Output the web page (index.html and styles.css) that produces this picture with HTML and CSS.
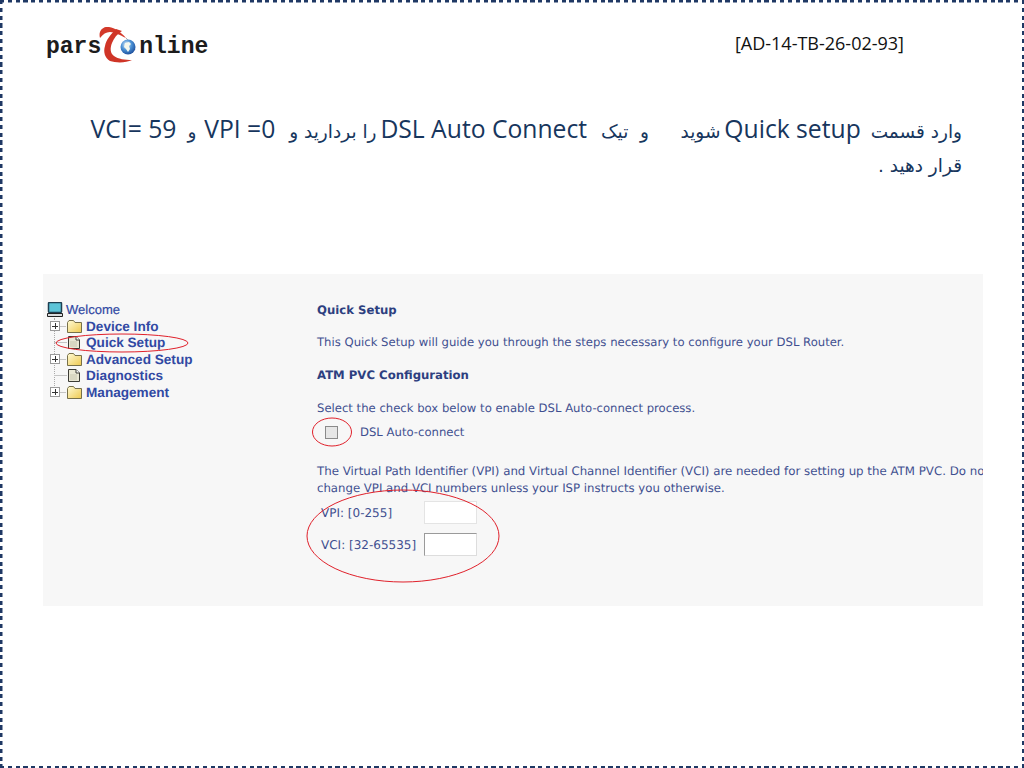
FILE: index.html
```html
<!DOCTYPE html>
<html lang="fa">
<head>
<meta charset="utf-8">
<title>Quick Setup</title>
<link rel="stylesheet" href="styles.css">
</head>
<body>
<svg class="defs" width="0" height="0">
  <defs>
    <linearGradient id="fold" x1="0" y1="0" x2="1" y2="1">
      <stop offset="0" stop-color="#fffbd6"/>
      <stop offset="1" stop-color="#eec94f"/>
    </linearGradient>
    <symbol id="i-folder" viewBox="0 0 17 15">
      <path d="M1.500 13.500V3.500L3 1.500H7.500L9 3.500H15.500V13.500Z" fill="url(#fold)" stroke="#77704a"/>
    </symbol>
    <symbol id="i-doc" viewBox="0 0 14 15">
      <path d="M1.500 1.500H9L12.500 5V13.500H1.500Z" fill="#e9e7d4" stroke="#3c3c36"/>
      <path d="M9 1.500V5H12.500" fill="#fff" stroke="#3c3c36"/>
      <path d="M3 7H10M3 9H10M3 11H10" stroke="#c9c7b0"/>
    </symbol>
  </defs>
</svg>
<main class="slide">
  <header class="top" dir="ltr">
    <div class="logo">
      <span>pars</span>
      <svg class="logo-mark" width="38" height="36" viewBox="0 0 38 36">
        <defs>
          <radialGradient id="globe" cx="0.4" cy="0.35" r="0.75">
            <stop offset="0" stop-color="#e8f2fb"/>
            <stop offset="0.45" stop-color="#4d93d6"/>
            <stop offset="1" stop-color="#123f8f"/>
          </radialGradient>
        </defs>
        <path d="M1 11C-1 4 4-1 10 0C16 1 22 5 27 11C21 8 15 5 11 5C7 5 4 7 1 11Z" fill="#d3392a"/>
        <path d="M17 2C12 7 7 13 6 19C4 25 6 31 11 34C17 36 27 36 33 33C26 33 19 32 15 29C11 26 11 21 13 16C15 11 18 7 23 4Z" fill="#cf3527"/>
        <path d="M27 11C31 15 34 19 36 23" fill="none" stroke="#b9a9a2" stroke-width="1"/>
        <circle cx="29" cy="20" r="7.500" fill="url(#globe)"/>
        <path d="M26 16l4-1 2 2-2 2 1 3-2 3-2-3-2-2z" fill="#f4f8ee"/>
      </svg>
      <span>nline</span>
    </div>
    <div class="doc-id">[AD-14-TB-26-02-93]</div>
  </header>

  <p class="title" dir="rtl">وارد قسمت <span class="lat q">Quick setup</span> <span class="s">شوید</span> &nbsp;&nbsp; و&nbsp; تیک <span class="lat d">DSL Auto Connect</span> را بردارید و <bdi class="lat v">VPI =0</bdi> و <bdi class="lat w">VCI= 59</bdi> قرار دهید .</p>

  <section class="shot">
    <nav class="tree">
      <div class="node root">
        <svg class="ico" width="18" height="16" viewBox="0 0 18 16"><rect x="2.500" y="0.500" width="13" height="10" rx="1" fill="#5cc4d8" stroke="#1d3f52" stroke-width="1.500"/><path d="M1.500 11.500h15v3h-15z" fill="#d9dcde" stroke="#222"/></svg>
        <span>Welcome</span>
      </div>
      <div class="node"><i class="plus"></i><i class="link"></i><svg class="leaf" width="17" height="15"><use href="#i-folder"/></svg><a>Device Info</a></div>
      <div class="node"><i class="stub"></i><svg class="leaf doc" width="14" height="15"><use href="#i-doc"/></svg><a>Quick Setup</a></div>
      <div class="node"><i class="plus"></i><i class="link"></i><svg class="leaf" width="17" height="15"><use href="#i-folder"/></svg><a>Advanced Setup</a></div>
      <div class="node"><i class="stub"></i><svg class="leaf doc" width="14" height="15"><use href="#i-doc"/></svg><a>Diagnostics</a></div>
      <div class="node"><i class="plus"></i><i class="link"></i><svg class="leaf" width="17" height="15"><use href="#i-folder"/></svg><a>Management</a></div>
    </nav>
    <div class="form">
      <h2>Quick Setup</h2>
      <p class="lead a">This Quick Setup will guide you through the steps necessary to configure your DSL Router.</p>
      <h2 class="sub">ATM PVC Configuration</h2>
      <p class="lead">Select the check box below to enable DSL Auto-connect process.</p>
      <label class="check"><input type="checkbox"><span>DSL Auto-connect</span></label>
      <p class="para"><span class="l1">The Virtual Path Identifier (VPI) and Virtual Channel Identifier (VCI) are needed for setting up the ATM PVC. Do not</span><br><span class="l2">change VPI and VCI numbers unless your ISP instructs you otherwise.</span></p>
      <div class="field vpi"><span>VPI: [0-255]</span><input type="text"></div>
      <div class="field vci"><span>VCI: [32-65535]</span><input type="text"></div>
    </div>
    <svg class="marks" width="940" height="332" viewBox="0 0 940 332">
      <ellipse cx="79" cy="69" rx="66" ry="9" />
      <ellipse cx="289" cy="158" rx="19.500" ry="14" />
      <ellipse cx="360" cy="262" rx="96" ry="46" />
    </svg>
  </section>
</main>
</body>
</html>
```
FILE: styles.css
```css
* { box-sizing: border-box; }
html, body { margin: 0; padding: 0; background: #fff; }
.defs { position: absolute; }
.slide {
  width: 1024px;
  height: 768px;
  overflow: hidden;
  padding: 26px 41px 0 43px;
  background-color: #fff;
  background-image:
    repeating-linear-gradient(90deg, #1f3864 0 4.200px, transparent 4.200px 7.800px),
    repeating-linear-gradient(90deg, #1f3864 0 4.200px, transparent 4.200px 7.800px),
    repeating-linear-gradient(180deg, #1f3864 0 4.200px, transparent 4.200px 7.800px),
    repeating-linear-gradient(180deg, #1f3864 0 4.200px, transparent 4.200px 7.800px);
  background-size: 100% 2.500px, 100% 2.500px, 2.500px 100%, 2.500px 100%;
  background-position: 0 0, 0 100%, 0 0, 100% 0;
  background-repeat: no-repeat;
}
.top {
  display: flex;
  justify-content: space-between;
  align-items: flex-start;
  height: 38px;
}
.logo {
  display: flex;
  align-items: center;
  margin-left: 3px;
  height: 38px;
  font: bold 23px/38px "Liberation Mono", monospace;
  color: #1c1c1c;
}
.logo span { position: relative; top: 2px; }
.logo-mark { display: block; flex: none; margin: 0 2px 0 -2px; }
.doc-id {
  margin: 5px 79px 0 0;
  font: 18px/24px "Open Sans", sans-serif;
  color: #111;
}
.title {
  margin: 48px 21px 0 36px;
  font: 18.500px/34px "DejaVu Sans", sans-serif;
  color: #17365d;
  height: 144px;
}
.lat { font: 24.700px/34px "Open Sans", sans-serif; white-space: nowrap; }
.q { margin-right: 4px; margin-left: -2px; }
.d { margin-right: 8px; margin-left: -2px; }
.s { margin-left: 8px; }
.v { margin-right: 8px; margin-left: 2px; }
.w { margin-right: 5px; }
.shot {
  position: relative;
  display: flex;
  width: 940px;
  height: 332px;
  margin-top: 18px;
  overflow: hidden;
  background: #f7f7f7;
  font-family: "DejaVu Sans", sans-serif;
  color: #3f4f90;
  text-rendering: geometricPrecision;
}
.tree {
  position: relative;
  flex: none;
  width: 274px;
  padding: 27px 0 0 3px;
  font-family: "Liberation Sans", sans-serif;
  color: #3149a3;
}
.tree::before {
  content: "";
  position: absolute;
  left: 11px;
  top: 44px;
  height: 72px;
  border-left: 1px dotted #aaa;
}
.node {
  position: relative;
  display: flex;
  align-items: center;
  height: 16.500px;
  font-size: 13.600px;
  font-weight: bold;
  padding-left: 4px;
}
.node a { margin-left: 3px; }
.root { height: 17px; padding-left: 0; font-size: 13px; font-weight: normal; -webkit-text-stroke: 0.2px #3149a3; }
.root span { margin-left: 2px; }
.ico { flex: none; }
.plus {
  position: relative;
  width: 10px;
  height: 10px;
  border: 1px solid #999;
  background: #fff;
  flex: none;
}
.plus::before { content: ""; position: absolute; left: 1px; right: 1px; top: 3.500px; height: 1px; background: #333; }
.plus::after { content: ""; position: absolute; top: 1px; bottom: 1px; left: 3.500px; width: 1px; background: #333; }
.link { width: 6px; height: 1px; background: #c4c4c4; flex: none; }
.stub { width: 13px; height: 1px; margin-left: 4px; background: #c4c4c4; flex: none; }
.leaf { display: block; flex: none; }
.doc { margin: 0 2px 0 0; }
.form { flex: none; width: 700px; padding-top: 27px; font-size: 11.650px; line-height: 16px; white-space: nowrap; }
.form h2 { margin: 1px 0 0; font-size: 11.700px; line-height: 16px; font-weight: bold; color: #2d3f80; }
.form .sub { margin-top: 17px; }
.lead { margin: 17px 0 0; }
.lead.a { margin-top: 16px; }
.form .sub + .lead { margin-top: 17px; }
.check { display: flex; align-items: center; height: 16px; margin-top: 8px; }
.check input {
  appearance: none;
  width: 13px;
  height: 13px;
  margin: 0 0 0 8px;
  border: 1px solid #8a8a8a;
  background: #e6e6e6;
}
.check span { margin-left: 22px; }
.para { margin: 23px 0 0; line-height: 17px; }
.l1 { font-size: 11.800px; }
.l2 { font-size: 11.730px; }
.field { display: flex; align-items: center; height: 23px; font-size: 12px; }
.field span { width: 107px; padding-left: 4px; }
.field input {
  width: 53px;
  height: 23px;
  margin: 0;
  padding: 0;
  background: #fff;
}
.vpi { margin-top: 4px; }
.vpi input { border: 1px solid #e4e4e4; }
.vci { margin-top: 9px; }
.vci input { border: 1px solid #9a9a9a; border-right-color: #ddd; border-bottom-color: #ddd; }
.marks { position: absolute; left: 0; top: 0; fill: none; stroke: #e0202a; stroke-width: 1; }
```
